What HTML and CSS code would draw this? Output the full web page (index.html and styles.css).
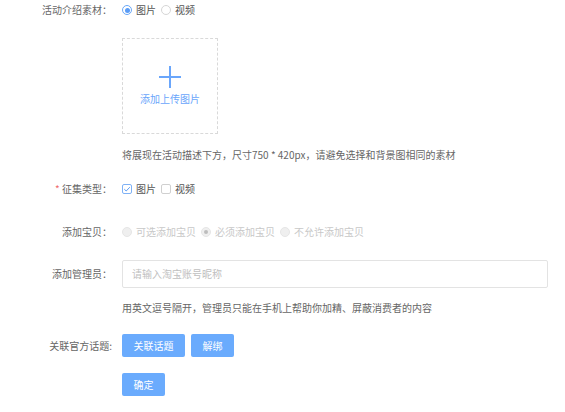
FILE: index.html
```html
<!DOCTYPE html>
<html lang="zh">
<head>
<meta charset="utf-8">
<link rel="stylesheet" href="styles.css">
</head>
<body>
<div class="form">
  <div class="row r1">
    <div class="label">活动介绍素材：</div>
    <div class="field">
      <span class="radio checked"></span><span class="opt">图片</span>
      <span class="radio"></span><span class="opt">视频</span>
    </div>
  </div>
  <div class="row r-upload">
    <div class="label"></div>
    <div class="field">
      <div class="upload">
        <span class="plus"></span>
        <span class="upload-text">添加上传图片</span>
      </div>
    </div>
  </div>
  <div class="row r-hint1">
    <div class="label"></div>
    <div class="field hint">将展现在活动描述下方，尺寸750 * 420px，请避免选择和背景图相同的素材</div>
  </div>
  <div class="row r-type">
    <div class="label"><span class="req">*</span> 征集类型：</div>
    <div class="field">
      <span class="checkbox checked"><svg width="8" height="8" viewBox="0 0 8 8"><path d="M1.3 4.2 L3.2 6 L6.8 2.2" fill="none" stroke="#5b9cf5" stroke-width="1"/></svg></span><span class="opt">图片</span>
      <span class="checkbox"></span><span class="opt">视频</span>
    </div>
  </div>
  <div class="row r-item">
    <div class="label">添加宝贝：</div>
    <div class="field disabled">
      <span class="radio dis"></span><span class="opt">可选添加宝贝</span>
      <span class="radio dis dchecked"></span><span class="opt">必须添加宝贝</span>
      <span class="radio dis"></span><span class="opt">不允许添加宝贝</span>
    </div>
  </div>
  <div class="row r-input">
    <div class="label">添加管理员：</div>
    <div class="field">
      <div class="input">请输入淘宝账号昵称</div>
    </div>
  </div>
  <div class="row r-hint2">
    <div class="label"></div>
    <div class="field hint">用英文逗号隔开，管理员只能在手机上帮助你加精、屏蔽消费者的内容</div>
  </div>
  <div class="row r-btns">
    <div class="label">关联官方话题:</div>
    <div class="field">
      <span class="btn wide">关联话题</span><span class="btn">解绑</span>
    </div>
  </div>
  <div class="row r-ok">
    <div class="label"></div>
    <div class="field">
      <span class="btn">确定</span>
    </div>
  </div>
</div>
</body>
</html>
```

FILE: styles.css
```css
* { box-sizing: border-box; }
html, body { margin: 0; padding: 0; background: #fff; }
body {
  font-family: "Noto Sans CJK SC", "Noto Sans", sans-serif;
  font-size: 10px;
  color: #666;
  width: 565px;
  height: 412px;
  overflow: hidden;
}
.form { display: flex; flex-direction: column; }
.row { display: flex; align-items: center; }
.label {
  width: 112px;
  flex: none;
  text-align: right;
  line-height: 20px;
  color: #666;
  white-space: nowrap;
}
.req { color: #f06a6a; }
.field {
  margin-left: 10px;
  display: flex;
  align-items: center;
  line-height: 20px;
  white-space: nowrap;
}
.r1 { height: 20px; }
.r-upload { margin-top: 18px; }
.r-hint1 { margin-top: 11px; }
.r-type { margin-top: 14px; }
.r-item { margin-top: 23px; }
.r-input { margin-top: 18px; }
.r-hint2 { margin-top: 10px; }
.r-btns { margin-top: 16px; }
.r-ok { margin-top: 16px; }

.radio {
  width: 10px; height: 10px;
  border: 1px solid #d6d6d6;
  border-radius: 50%;
  display: inline-flex;
  align-items: center;
  justify-content: center;
  background: #fff;
}
.radio.checked { border-color: #6aa8f8; }
.radio.checked::after {
  content: "";
  width: 5px; height: 5px;
  border-radius: 50%;
  background: #5a9cf6;
}
.radio.dis { background: #efefef; border-color: #e6e6e6; }
.radio.dchecked::after {
  content: "";
  width: 4px; height: 4px;
  border-radius: 50%;
  background: #bdbdbd;
}
.opt { margin-left: 4px; margin-right: 5px; color: #555; }
.disabled .opt { color: #c8c8c8; }

.checkbox {
  width: 10px; height: 10px;
  border: 1px solid #d0d0d0;
  border-radius: 2px;
  display: inline-flex;
  align-items: center;
  justify-content: center;
}
.checkbox.checked { border-color: #7fb2f6; }
.checkbox svg { display: block; }

.upload {
  width: 96px; height: 96px;
  border: 1px dashed #d9d9d9;
  display: flex;
  flex-direction: column;
  align-items: center;
}
.plus {
  position: relative;
  width: 22px; height: 22px;
  margin-top: 27px;
}
.plus::before, .plus::after {
  content: "";
  position: absolute;
  background: #6aa6fb;
}
.plus::before { left: 0; top: 10px; width: 22px; height: 2px; }
.plus::after { left: 10px; top: 0; width: 2px; height: 22px; }
.upload-text { margin-top: 1px; color: #6aa6fb; line-height: 20px; }

.hint { color: #666; }

.input {
  width: 426px; height: 28px;
  border: 1px solid #e3e3e3;
  border-radius: 2px;
  padding-left: 9px;
  line-height: 26px;
  color: #c0c0c0;
}
.r-input .label { line-height: 28px; }

.btn {
  display: inline-flex;
  align-items: center;
  justify-content: center;
  width: 43px; height: 23px;
  background: #6aabfd;
  border-radius: 2px;
  color: #fff;
  margin-right: 6px;
}
.btn.wide { width: 63px; }
```
